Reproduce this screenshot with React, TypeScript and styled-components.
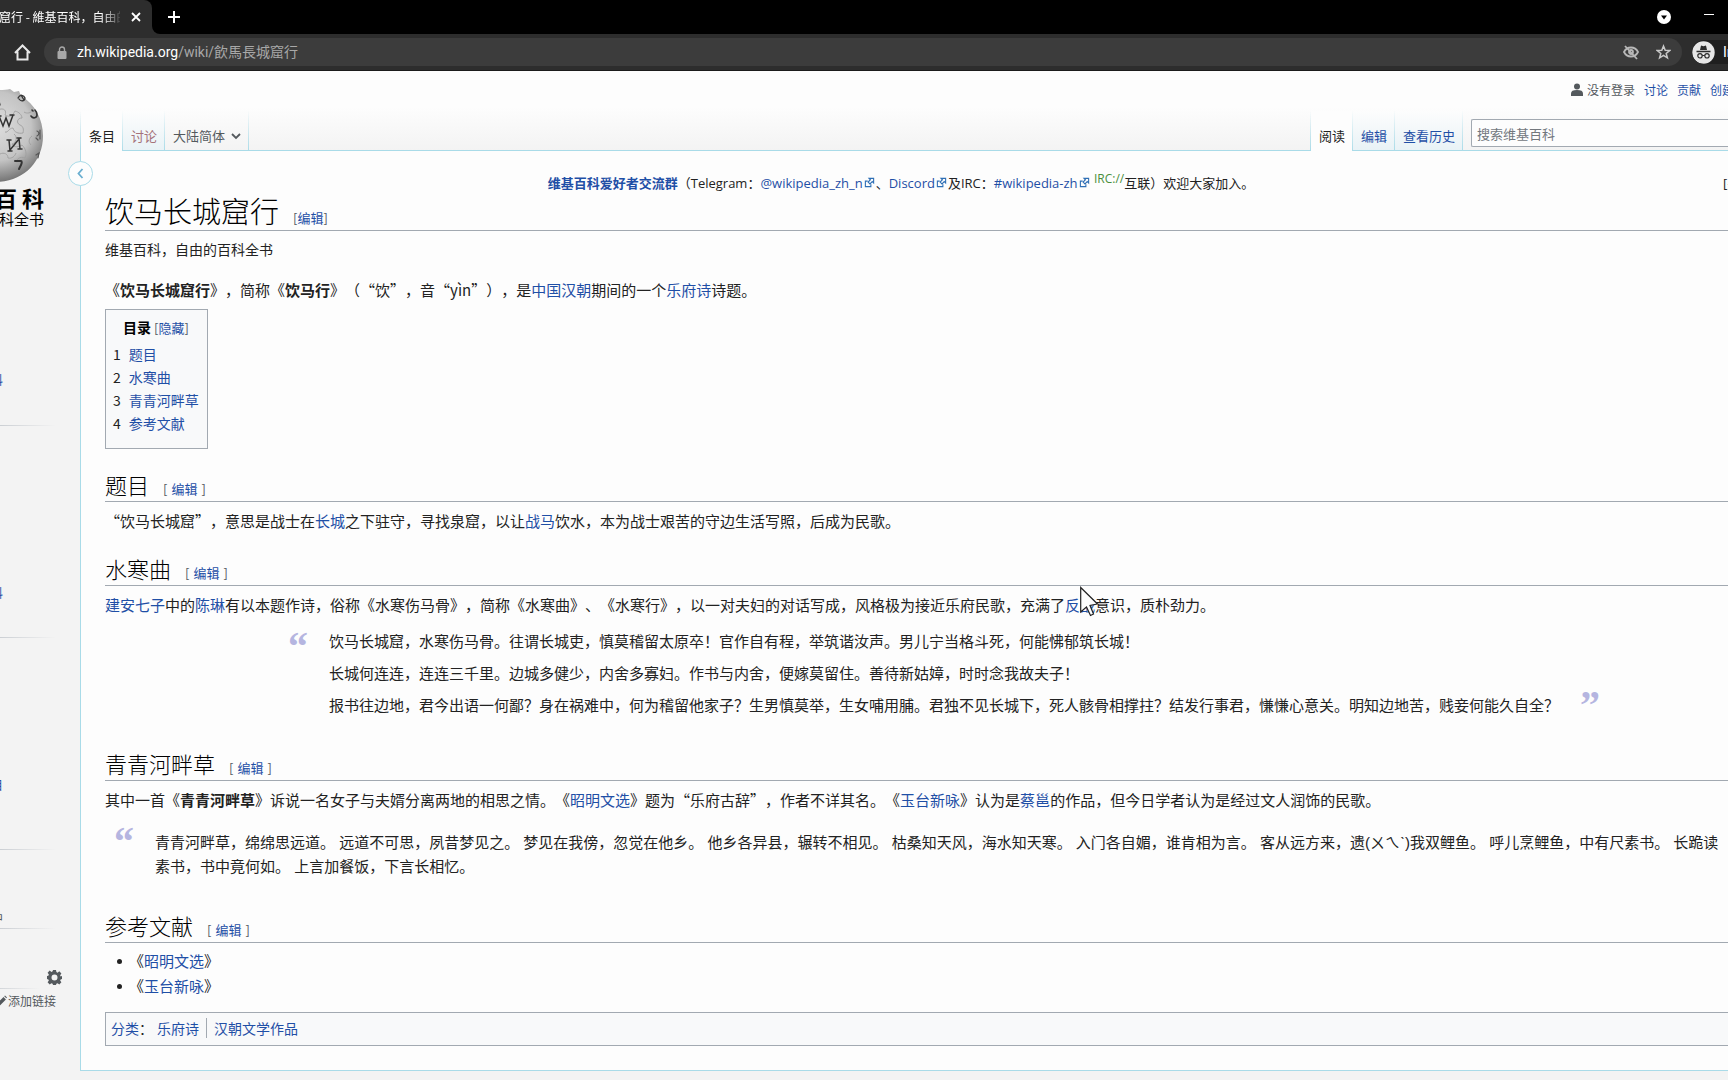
import React from "react";
import styled, { createGlobalStyle, css } from "styled-components";

const cjk = `"Noto Sans CJK SC", sans-serif`;
const mixed = `"Open Sans", "Noto Sans CJK SC", sans-serif`;
const blue = "#1f4fa6";
const rule = "#a2a9b1";
const frame = "#a9dbe8";

const GlobalStyle = createGlobalStyle`
  * { box-sizing: border-box; }
  html { background: #f3f3f3; }
  body {
    margin: 0;
    font-family: ${cjk};
    font-size: 15px;
    line-height: 24px;
    color: #222;
    text-spacing-trim: space-all;
    overflow-x: hidden;
  }
  a { color: ${blue}; text-decoration: none; }
  button { font: inherit; color: inherit; background: none; border: 0; padding: 0; margin: 0; }
  ul, ol, h1, h2, h3, p, blockquote { margin: 0; padding: 0; list-style: none; font-weight: inherit; }
  svg { display: block; flex: none; }
`;

/* ---------- browser frame ---------- */

const TabStrip = styled.div`
  display: flex;
  align-items: stretch;
  height: 34px;
  background: linear-gradient(#000 50%, #2d2d2d 50%);
  color: #fff;
`;

const BrowserTab = styled.div`
  display: flex;
  align-items: center;
  justify-content: flex-end;
  gap: 10px;
  width: 152px;
  padding-right: 10px;
  overflow: hidden;
  border-radius: 0 8px 0 0;
  background: #2d2d2d;
  font-size: 12px;
  line-height: 20px;
`;

const TabTitle = styled.span`
  flex: none;
  width: 169px;
  white-space: nowrap;
  overflow: hidden;
  mask-image: linear-gradient(to right, #000 150px, transparent 172px);
`;

const StripRest = styled.div`
  flex: 1;
  display: flex;
  align-items: stretch;
  justify-content: space-between;
  border-radius: 0 0 0 8px;
  background: #000;
`;

const StripButton = styled.button`
  display: flex;
  align-items: center;
  justify-content: center;
  width: 44px;
`;

const StripEnd = styled.div`
  display: flex;
  align-items: center;
  gap: 33px;
  padding-right: 14px;
`;

const Toolbar = styled.div`
  display: flex;
  align-items: center;
  height: 37px;
  border-bottom: 1px solid #1c1c1c;
  background: #2d2d2d;
  color: #e8e8e8;
  overflow: hidden;
`;

const HomeButton = styled.button`
  display: flex;
  justify-content: center;
  width: 44px;
`;

const AddressBar = styled.div`
  flex: 1;
  display: flex;
  align-items: center;
  height: 28px;
  padding: 0 11px 0 13px;
  border-radius: 14px;
  background: #3c3c3c;
  color: #a8a8a8;
`;

const AddressText = styled.div`
  flex: 1;
  padding-left: 10px;
  font-family: Roboto, "Noto Sans CJK TC", sans-serif;
  font-size: 14px;
  line-height: 20px;
  b { font-weight: 400; color: #fff; }
`;

const AddressIcons = styled.div`
  display: flex;
  gap: 17px;
`;

const Profile = styled.div`
  display: flex;
  align-items: center;
  gap: 8px;
  width: 36px;
  margin-left: 10px;
  overflow: hidden;
  border-radius: 14px 0 0 14px;
  background: #1f1f1f;
  color: #fff;
  font-family: Roboto, sans-serif;
  font-size: 14px;
`;

/* ---------- page skeleton ---------- */

const Page = styled.div`
  display: flex;
  background: #f3f3f3 linear-gradient(#fdfdfd 45%, #f3f3f3) no-repeat;
  background-size: 100% 80px;
  overflow: hidden;
  padding-bottom: 8px;
`;

const Sidebar = styled.aside`
  flex: none;
  width: 176px;
  margin-left: -96px;
  font-size: 12px;
  line-height: 18px;
  overflow: hidden;
`;

const Main = styled.main`
  flex: 1;
  min-width: 0;
`;

const Logo = styled.a`
  display: flex;
  flex-direction: column;
  align-items: flex-end;
  height: 165px;
  padding: 17px 36px 0 0;
  color: #000;
`;

const LogoName = styled.span`
  font-size: 22px;
  line-height: 26px;
  font-weight: 700;
  white-space: nowrap;
`;

const LogoTag = styled.span`
  font-size: 15px;
  line-height: 18px;
`;

const Portal = styled.section<{ $top: number; $bottom: number; $short?: boolean }>`
  padding: ${(p) => p.$top}px 24px ${(p) => p.$bottom}px 27px;
  background: linear-gradient(to right, #c8ccd1 60%, rgba(200, 204, 209, 0)) no-repeat
    0 100% / ${(p) => (p.$short ? 136 : 152)}px 1px;
`;

const PortalTitle = styled.h3`
  color: #54595d;
  font-size: 12px;
`;

const SideLink = styled.a`
  display: block;
`;

const GearButton = styled.button`
  display: block;
  margin: 0 -6px 0 auto;
  color: #54595d;
`;

const AddLinks = styled.a`
  display: flex;
  align-items: center;
  justify-content: flex-end;
  gap: 1px;
  padding: 3px 24px 0 0;
  color: #54595d;
`;

/* ---------- page head ---------- */

const Head = styled.header`
  display: flex;
  flex-direction: column;
  justify-content: space-between;
  height: 80px;
`;

const Personal = styled.ul`
  display: flex;
  align-items: center;
  justify-content: flex-end;
  gap: 9px;
  padding-top: 10px;
  font-size: 12px;
  line-height: 18px;
  white-space: nowrap;
`;

const PersonalItem = styled.li<{ $clip?: boolean }>`
  display: flex;
  align-items: center;
  gap: 4px;
  color: #54595d;
  ${(p) => p.$clip && css`width: 18px; overflow: hidden;`}
`;

const TabRow = styled.div`
  position: relative;
  z-index: 1;
  display: flex;
  align-items: flex-end;
`;

const TabList = styled.ul<{ $end?: boolean }>`
  display: flex;
  padding-left: 1px;
  background: linear-gradient(#fdfdfd00, ${frame}) no-repeat 0 0 / 1px 100%;
  font-size: 13px;
  line-height: 20px;
  ${(p) => p.$end && css`margin-left: auto;`}
`;

const Tab = styled.li<{ $active?: boolean; $plain?: boolean }>`
  height: 40px;
  padding: 15px 7px 0 8px;
  border: 0 solid;
  border-right-width: 1px;
  border-image: linear-gradient(#fdfdfd00, ${frame}) 1;
  background: ${(p) =>
    p.$active
      ? "#fdfdfd"
      : p.$plain
        ? `linear-gradient(${frame}, ${frame}) no-repeat 0 100% / 100% 1px`
        : `linear-gradient(${frame}, ${frame}) no-repeat 0 100% / 100% 1px, linear-gradient(#fdfdfd, #e8f2f6)`};
`;

const TabLink = styled.a<{ $tone: "dark" | "grey" | "red" | "blue" }>`
  display: flex;
  align-items: center;
  gap: 6px;
  color: ${(p) => ({ dark: "#222", grey: "#54595d", red: "#a5727a", blue })[p.$tone]};
`;

const Search = styled.form`
  width: 257px;
  margin-left: 8px;
  padding-bottom: 4px;
`;

const SearchInput = styled.input`
  display: block;
  width: 100%;
  height: 28px;
  padding: 0 5px;
  border: 1px solid #a2a9b1;
  border-right: 0;
  border-radius: 2px 0 0 2px;
  background: #fdfdfd;
  font-family: ${cjk};
  font-size: 13px;
  &::placeholder { color: #72777d; opacity: 1; }
`;

/* ---------- article ---------- */

const Article = styled.article`
  position: relative;
  margin-top: -1px;
  padding: 21px 0 24px 24px;
  border: 1px solid ${frame};
  border-right: 0;
  background: #fdfdfd;
`;

const Collapse = styled.button`
  position: absolute;
  top: 10px;
  left: -13px;
  display: grid;
  place-items: center;
  width: 25px;
  height: 25px;
  border: 1px solid ${frame};
  border-radius: 50%;
  background: #fdfdfd;
  color: #6aaed0;
`;

const Notice = styled.div`
  display: flex;
  justify-content: space-between;
  font-family: ${mixed};
  font-size: 13px;
  line-height: 22px;
`;

const NoticeText = styled.p`
  flex: 1;
  text-align: center;
  white-space: nowrap;
  b { color: ${blue}; }
  svg { display: inline-block; margin: 0 1px; }
`;

const Server = styled.sup`
  color: #4a8f3c;
  font-size: 12px;
  line-height: 1;
`;

const Dismiss = styled.button`
  width: 5px;
  margin-left: 26px;
  overflow: hidden;
  white-space: nowrap;
  text-align: left;
`;

const Title = styled.h1`
  padding-bottom: 3px;
  border-bottom: 1px solid ${rule};
  font-size: 29px;
  line-height: 33px;
  font-weight: 300;
  color: #000;
`;

const Section = styled.h2`
  margin-top: 22px;
  padding-bottom: 4px;
  border-bottom: 1px solid ${rule};
  font-size: 22px;
  line-height: 26px;
  font-weight: 300;
  color: #000;
`;

const EditMark = styled.span<{ $loose?: boolean }>`
  margin-left: 14px;
  color: #54595d;
  font-size: 13px;
  font-weight: 400;
  line-height: 1;
  a { margin: 0 ${(p) => (p.$loose ? 4 : 0)}px; }
`;

const SiteSub = styled.p`
  margin-top: 8px;
  font-size: 14px;
  line-height: 20px;
`;

const Para = styled.p<{ $top?: number }>`
  margin-top: ${(p) => p.$top ?? 7}px;
`;

const Toc = styled.nav`
  width: fit-content;
  margin: 7px 0 22px;
  padding: 5px 8px 13px 7px;
  border: 1px solid ${rule};
  background: #f8f9fa;
  font-size: 14px;
`;

const TocTitle = styled.div`
  margin-bottom: 3px;
  text-align: center;
  color: #000;
  button { color: ${blue}; }
  span { font-size: 13px; color: #54595d; }
`;

const TocItem = styled.li`
  display: flex;
  gap: 8px;
  line-height: 23px;
`;

const Quote = styled.blockquote<{ $center?: boolean }>`
  display: flex;
  margin-top: 12px;
  margin-bottom: 33px;
  padding-left: 9px;
  ${(p) =>
    p.$center &&
    css`
      justify-content: center;
      padding-left: 55px;
    `}
`;

const QuoteMark = styled.span<{ $end?: boolean }>`
  flex: none;
  align-self: ${(p) => (p.$end ? "flex-end" : "flex-start")};
  width: 41px;
  height: ${(p) => (p.$end ? 30 : 24)}px;
  font-family: "Liberation Serif", serif;
  font-weight: 700;
  font-size: 40px;
  line-height: 36px;
  color: #b5b5e0;
  text-align: ${(p) => (p.$end ? "right" : "left")};
`;

const Lines = styled.div`
  display: flex;
  flex-direction: column;
  gap: 8px;
`;

const Poem = styled.p`
  padding-top: 7px;
  font-family: "Liberation Sans", "Noto Sans CJK SC", sans-serif;
`;

const References = styled.ul`
  display: grid;
  gap: 1px;
  margin-top: 6px;
  padding-left: 12px;
`;

const Reference = styled.li`
  display: flex;
  align-items: center;
  &::before {
    content: "";
    width: 5px;
    height: 5px;
    margin-right: 7px;
    border-radius: 50%;
    background: #222;
  }
`;

const Categories = styled.nav`
  display: flex;
  align-items: center;
  margin-top: 14px;
  padding: 3px 5px 5px;
  border: 1px solid ${rule};
  border-right: 0;
  background: #f8f9fa;
  font-size: 14px;
`;

const CategoryLink = styled.a<{ $divided?: boolean }>`
  margin-left: ${(p) => (p.$divided ? 7 : 4)}px;
  padding-left: ${(p) => (p.$divided ? 7 : 0)}px;
  border-left: ${(p) => (p.$divided ? `1px solid ${rule}` : "0")};
  line-height: 20px;
`;

const Pointer = styled.span`
  position: relative;
  svg { position: absolute; left: 0; top: -8px; }
`;

/* ---------- drawings ---------- */

const ExternalIcon = () => (
  <svg width="11" height="11" viewBox="0 0 12 12" fill="none" stroke="#2f6fb5" strokeWidth="1.2">
    <path d="M4 4.5H1.5v6h6V8" />
    <path d="M5.5 1.5h5v5L9 5 6.5 7.5l-2-2L7 3z" />
  </svg>
);

const Globe = () => (
  <svg width="96" height="96" viewBox="0 0 96 96">
    <defs>
      <radialGradient id="ball" cx="0.5" cy="0.4" r="0.62">
        <stop offset="0" stopColor="#dedede" />
        <stop offset="0.6" stopColor="#c4c4c4" />
        <stop offset="1" stopColor="#6e6e6e" />
      </radialGradient>
    </defs>
    <path d="M48 2c5 0 10 0 14-1l4 3 5-1 2 5c14 8 22 23 22 40 0 26-20 46-47 46S1 74 1 48 22 2 48 2z" fill="url(#ball)" />
    <g fill="none" stroke="#9f9f9f" strokeWidth="0.900">
      <path d="M50 22c6-3 9 1 7 5 5 3 8 0 10-4 4 1 7 4 7 7-5 0-6 5-2 7 3 1 4 4 3 8-5 1-9-1-10-5-4 0-5 5-8 4M66 46c4 3 2 9-2 10 2 4 7 3 10 1 4 4 5 9 3 13-5-2-9 1-8 5M52 66c4-2 8 0 8 4 4 1 7-2 8-5M76 24c3 2 7 1 9-2M84 48c-3 2-4 6-1 9" />
    </g>
    <g fill="none" stroke="#333" strokeLinecap="round">
      <path d="M51 28l4 10 3-8 3 8 4-11M49 28h4M62 27h4" strokeWidth="1.500" />
      <path d="M61 52l1 11M71 50l1 11M62 62l9-11M59 52h4M69 50h4M60 63h4M70 61h4" strokeWidth="1.500" />
      <path d="M67 73h6c1 0 1 2 0 4l-2 4" strokeWidth="2" />
      <path d="M83 28c2 3 6 2 6-1 0-2-1-4-2-5M84 22l1 1" strokeWidth="1.600" />
      <path d="M70 10c2-4 6-3 7 0 0 3-4 4-6 1M73 7l3 5M51 13l1 4" strokeWidth="1.300" />
      <path d="M89 43c3 1 2 4 0 5M92 42v9M88 50l2 2M88 67l3-2-1 5" strokeWidth="1.200" stroke="#555" />
    </g>
  </svg>
);

const Gear = () => (
  <svg width="15" height="15" viewBox="0 0 20 20" fill="currentColor">
    <path
      fillRule="evenodd"
      d="M8 0h4l.5 2.8 1.6.7 2.3-1.7 2.8 2.8-1.7 2.3.7 1.6L20 8v4l-1.800.5-.7 1.600 1.700 2.300-2.800 2.800-2.300-1.700-1.600.7L12 20H8l-.5-1.800-1.600-.7-2.300 1.700-2.800-2.800 1.700-2.300-.7-1.600L0 12V8l1.800-.5.7-1.600L.8 3.600 3.600.8l2.300 1.700 1.600-.7zM10 6a4 4 0 100 8 4 4 0 000-8z"
    />
  </svg>
);

/* ---------- page ---------- */

const Edit = ({ loose }: { loose?: boolean }) => (
  <EditMark $loose={loose}>
    [<a href="#edit">编辑</a>]
  </EditMark>
);

const toc = ["题目", "水寒曲", "青青河畔草", "参考文献"];

const ballad = [
  "饮马长城窟，水寒伤马骨。往谓长城吏，慎莫稽留太原卒！官作自有程，举筑谐汝声。男儿宁当格斗死，何能怫郁筑长城！",
  "长城何连连，连连三千里。边城多健少，内舍多寡妇。作书与内舍，便嫁莫留住。善待新姑嫜，时时念我故夫子！",
  "报书往边地，君今出语一何鄙？身在祸难中，何为稽留他家子？生男慎莫举，生女哺用脯。君独不见长城下，死人骸骨相撑拄？结发行事君，慊慊心意关。明知边地苦，贱妾何能久自全？",
];

const poem = [
  "青青河畔草，绵绵思远道。",
  "远道不可思，夙昔梦见之。",
  "梦见在我傍，忽觉在他乡。",
  "他乡各异县，辗转不相见。",
  "枯桑知天风，海水知天寒。",
  "入门各自媚，谁肯相为言。",
  "客从远方来，遗(ㄨㄟˋ)我双鲤鱼。",
  "呼儿烹鲤鱼，中有尺素书。",
  "长跪读素书，书中竟何如。",
  "上言加餐饭，下言长相忆。",
].join(" ");

export default function App() {
  return (
    <>
      <GlobalStyle />
      <TabStrip>
        <BrowserTab>
          <TabTitle>飲馬長城窟行 - 維基百科，自由的百科全書</TabTitle>
          <button aria-label="关闭标签页">
            <svg width="12" height="12" viewBox="0 0 12 12" stroke="#fff" strokeWidth="1.8">
              <path d="M2 2l8 8M10 2l-8 8" />
            </svg>
          </button>
        </BrowserTab>
        <StripRest>
          <StripButton aria-label="新标签页">
            <svg width="14" height="14" viewBox="0 0 14 14" stroke="#fff" strokeWidth="2">
              <path d="M7 1v12M1 7h12" />
            </svg>
          </StripButton>
          <StripEnd>
            <button aria-label="搜索标签页">
              <svg width="14" height="14" viewBox="0 0 14 14">
                <circle cx="7" cy="7" r="7" fill="#fff" />
                <path d="M4 5.500h6L7 9.500z" fill="#000" />
              </svg>
            </button>
            <button aria-label="最小化">
              <svg width="10" height="6" viewBox="0 0 10 6">
                <path d="M0 0.500h10" stroke="#fff" strokeWidth="1" />
              </svg>
            </button>
          </StripEnd>
        </StripRest>
      </TabStrip>
      <Toolbar>
        <HomeButton aria-label="主页">
          <svg width="17" height="17" viewBox="0 0 17 17" fill="none" stroke="#e8e8e8" strokeWidth="2">
            <path d="M1 9l7.500-7.500L16 9M3.500 7.500V15.500h10V7.500" />
          </svg>
        </HomeButton>
        <AddressBar>
          <svg width="10" height="13" viewBox="0 0 10 13">
            <rect x="0.500" y="5" width="9" height="8" rx="1" fill="#a8a8a8" />
            <path d="M2.500 5V3.500a2.500 2.500 0 015 0V5" fill="none" stroke="#a8a8a8" strokeWidth="1.400" />
          </svg>
          <AddressText>
            <b>zh.wikipedia.org</b>/wiki/飲馬長城窟行
          </AddressText>
          <AddressIcons>
            <svg width="16" height="16" viewBox="0 0 16 16" fill="none" stroke="#b8b8b8" strokeWidth="1.800">
              <path d="M1 8c3-6 11-6 14 0-3 6-11 6-14 0z" />
              <circle cx="8" cy="8" r="2" />
              <path d="M2 2l12 13" />
            </svg>
            <svg width="15" height="16" viewBox="0 0 15 16" fill="none" stroke="#c8c8c8" strokeWidth="1.500">
              <path d="M7.500 2l1.700 4.200 4.500.3-3.500 2.900 1.200 4.400-3.900-2.500-3.900 2.500 1.200-4.400L1.300 6.500l4.500-.3z" />
            </svg>
          </AddressIcons>
        </AddressBar>
        <Profile>
          <svg width="23" height="23" viewBox="0 0 23 23">
            <circle cx="11.500" cy="11.500" r="11.200" fill="#e6e6e6" />
            <path d="M8 9l1-4.500 2.500.7 2.500-.7L15 9z" fill="#2b2b2b" />
            <path d="M4.500 10.500h14" stroke="#2b2b2b" strokeWidth="1.400" />
            <g fill="none" stroke="#2b2b2b" strokeWidth="1.200">
              <circle cx="8" cy="14.800" r="2.200" />
              <circle cx="15" cy="14.800" r="2.200" />
              <path d="M10.200 14.500h2.600" />
            </g>
          </svg>
          Incognito
        </Profile>
      </Toolbar>
      <Page>
        <Sidebar>
          <Logo href="#home" aria-label="首页">
            <Globe />
            <LogoName>维 基 百 科</LogoName>
            <LogoTag>自由的百科全书</LogoTag>
          </Logo>
          <Portal $top={135} $bottom={37}>
            <SideLink href="#donate">资助维基百科</SideLink>
          </Portal>
          <Portal $top={158} $bottom={36}>
            <SideLink href="#about">关于维基百科</SideLink>
          </Portal>
          <Portal $top={138} $bottom={56}>
            <SideLink href="#item">维基数据项目</SideLink>
          </Portal>
          <Portal $top={59} $bottom={2}>
            <PortalTitle>在其他项目中</PortalTitle>
          </Portal>
          <Portal $top={41} $bottom={4} $short>
            <GearButton aria-label="语言设置">
              <Gear />
            </GearButton>
          </Portal>
          <AddLinks href="#links">
            <svg width="11" height="12" viewBox="0 0 11 12" fill="#54595d">
              <path d="M1 11l.8-3.200L7.500 2l2.400 2.400L4.200 10.200zM8.200 1.300L9 .5l2 2-.7.800z" />
            </svg>
            添加链接
          </AddLinks>
        </Sidebar>
        <Main>
          <Head>
            <Personal>
              <PersonalItem>
                <svg width="12" height="14" viewBox="0 0 12 14" fill="#54595d">
                  <circle cx="6" cy="3.500" r="3" />
                  <path d="M0 13V10.500C0 8 2 7 6 7s6 1 6 3.500V13z" />
                </svg>
                没有登录
              </PersonalItem>
              <PersonalItem><a href="#talk">讨论</a></PersonalItem>
              <PersonalItem><a href="#contrib">贡献</a></PersonalItem>
              <PersonalItem $clip><a href="#signup">创建账号</a></PersonalItem>
            </Personal>
            <TabRow>
              <TabList>
                <Tab $active><TabLink $tone="dark" href="#article">条目</TabLink></Tab>
                <Tab><TabLink $tone="red" href="#discussion">讨论</TabLink></Tab>
                <Tab $plain>
                  <TabLink $tone="grey" href="#variant">
                    大陆简体
                    <svg width="10" height="7" viewBox="0 0 10 7" fill="none" stroke="#54595d" strokeWidth="1.800">
                      <path d="M1 1l4 4 4-4" />
                    </svg>
                  </TabLink>
                </Tab>
              </TabList>
              <TabList $end>
                <Tab $active><TabLink $tone="dark" href="#read">阅读</TabLink></Tab>
                <Tab><TabLink $tone="blue" href="#edit">编辑</TabLink></Tab>
                <Tab><TabLink $tone="blue" href="#history">查看历史</TabLink></Tab>
              </TabList>
              <Search>
                <SearchInput aria-label="搜索维基百科" placeholder="搜索维基百科" />
              </Search>
            </TabRow>
          </Head>
          <Article>
            <Collapse aria-label="收起侧栏">
              <svg width="7" height="11" viewBox="0 0 7 11" fill="none" stroke="currentColor" strokeWidth="1.800">
                <path d="M5.500 1L1.500 5.500l4 4.500" />
              </svg>
            </Collapse>
            <Notice>
              <NoticeText>
                <b>维基百科爱好者交流群</b>（Telegram：<a href="#tg">@wikipedia_zh_n<ExternalIcon /></a>、
                <a href="#discord">Discord<ExternalIcon /></a>及IRC：
                <a href="#irc">#wikipedia-zh<ExternalIcon /></a> <Server>IRC://</Server>互联）欢迎大家加入。
              </NoticeText>
              <Dismiss>[关闭]</Dismiss>
            </Notice>
            <Title>饮马长城窟行<Edit /></Title>
            <SiteSub>维基百科，自由的百科全书</SiteSub>
            <Para $top={19}>
              《<b>饮马长城窟行</b>》，简称《<b>饮马行</b>》（“饮”，音“yìn”），是<a href="#china">中国</a>
              <a href="#han">汉朝</a>期间的一个<a href="#yuefu">乐府诗</a>诗题。
            </Para>
            <Toc aria-label="目录">
              <TocTitle>
                <b>目录</b> <span>[<button>隐藏</button>]</span>
              </TocTitle>
              <ol>
                {toc.map((t, i) => (
                  <TocItem key={t}>
                    {i + 1}
                    <a href={`#s${i + 1}`}>{t}</a>
                  </TocItem>
                ))}
              </ol>
            </Toc>
            <Section id="s1">题目<Edit loose /></Section>
            <Para>
              “饮马长城窟”，意思是战士在<a href="#wall">长城</a>之下驻守，寻找泉窟，以让
              <a href="#horse">战马</a>饮水，本为战士艰苦的守边生活写照，后成为民歌。
            </Para>
            <Section id="s2">水寒曲<Edit loose /></Section>
            <Para>
              <a href="#seven">建安七子</a>中的<a href="#chen">陈琳</a>
              有以本题作诗，俗称《水寒伤马骨》，简称《水寒曲》、《水寒行》，以一对夫妇的对话写成，风格极为接近乐府民歌，充满了
              <a href="#antiwar">
                反
                <Pointer>
                  战
                  <svg width="19" height="31" viewBox="0 0 19 31">
                    <path d="M.7 1.500V26l5.800-5 4 8.500 3-1.500-3.500-8.500 7.500-1.500z" fill="#fdfdfd" stroke="#222" strokeWidth="1.200" />
                  </svg>
                </Pointer>
              </a>
              意识，质朴劲力。
            </Para>
            <Quote $center>
              <QuoteMark aria-hidden>“</QuoteMark>
              <Lines>
                {ballad.map((line) => (
                  <p key={line}>{line}</p>
                ))}
              </Lines>
              <QuoteMark $end aria-hidden>”</QuoteMark>
            </Quote>
            <Section id="s3">青青河畔草<Edit loose /></Section>
            <Para>
              其中一首《<b>青青河畔草</b>》诉说一名女子与夫婿分离两地的相思之情。《<a href="#wenxuan">昭明文选</a>
              》题为“乐府古辞”，作者不详其名。《<a href="#yutai">玉台新咏</a>》认为是<a href="#cai">蔡邕</a>
              的作品，但今日学者认为是经过文人润饰的民歌。
            </Para>
            <Quote>
              <QuoteMark aria-hidden>“</QuoteMark>
              <Poem>{poem}</Poem>
            </Quote>
            <Section id="s4">参考文献<Edit loose /></Section>
            <References>
              <Reference>《<a href="#wenxuan">昭明文选</a>》</Reference>
              <Reference>《<a href="#yutai">玉台新咏</a>》</Reference>
            </References>
            <Categories aria-label="分类">
              <a href="#categories">分类</a>：
              <CategoryLink href="#c1">乐府诗</CategoryLink>
              <CategoryLink $divided href="#c2">汉朝文学作品</CategoryLink>
            </Categories>
          </Article>
        </Main>
      </Page>
    </>
  );
}
